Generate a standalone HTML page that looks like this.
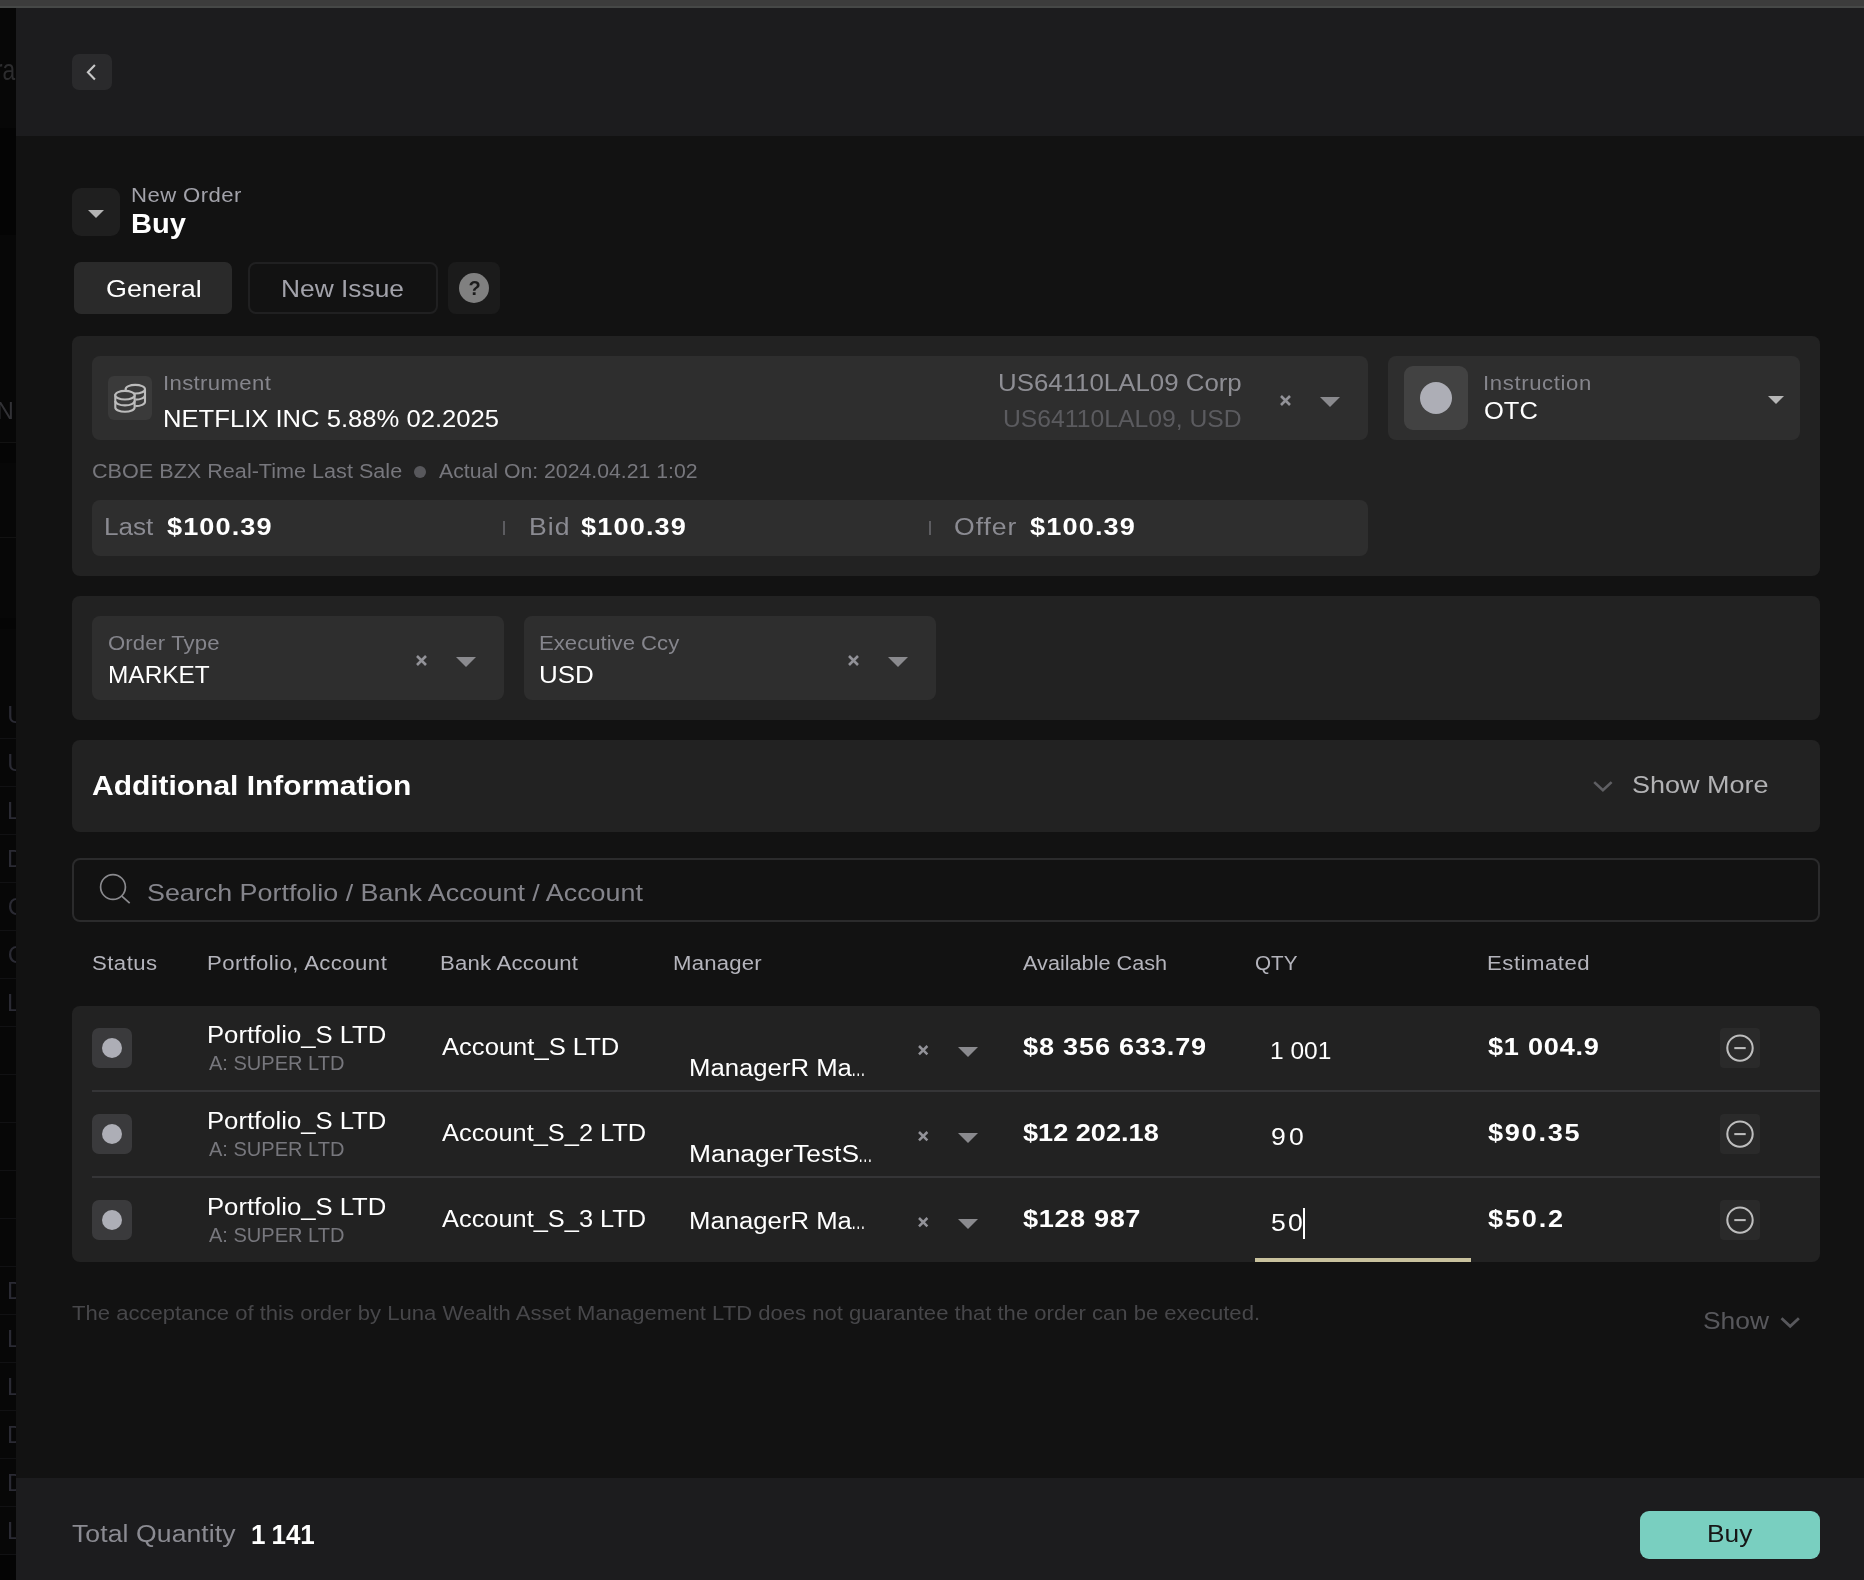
<!DOCTYPE html>
<html lang="en">
<head>
<meta charset="utf-8">
<title>New Order - Buy</title>
<style>
html,body{margin:0;padding:0;}
body{width:1864px;height:1580px;background:#121212;position:relative;overflow:hidden;font-family:"Liberation Sans",sans-serif;}
#app{position:absolute;left:0;top:0;width:1864px;height:1580px;will-change:transform;}
.b{position:absolute;box-sizing:border-box;display:block;}
.t{position:absolute;white-space:pre;line-height:1;font-weight:400;transform-origin:0 0;}
</style>
</head>
<body>
<div id="app">
<div class="b" style="left:0px;top:0px;width:1864px;height:6px;background:#3c3c3c;"></div>
<div class="b" style="left:0px;top:6px;width:1864px;height:2px;background:#464847;"></div>
<div class="b" style="left:0;top:0;width:16px;height:1580px;overflow:hidden">
<div class="b" style="left:0px;top:8px;width:16px;height:1572px;background:#070707;"></div>
<div class="b" style="left:0px;top:128px;width:16px;height:107px;background:#040404;"></div>
<div class="b" style="left:0px;top:1555px;width:16px;height:25px;background:#040404;"></div>
<div class="b" style="left:0px;top:442px;width:16px;height:1px;background:#121212;"></div>
<div class="b" style="left:0px;top:537px;width:16px;height:1px;background:#121212;"></div>
<div class="b" style="left:0px;top:443px;width:16px;height:20px;background:#050505;"></div>
<div class="b" style="left:0px;top:618px;width:16px;height:11px;background:#050505;"></div>
<span class="t" style="left:-4.52px;top:55px;font-size:30px;color:#2c2c2e;letter-spacing:-0.156px;transform:scaleX(0.7600);">ra</span>
<span class="t" style="left:-3.50px;top:399px;font-size:24px;color:#323236;">N</span>
<span class="t" style="left:7.25px;top:703px;font-size:24px;color:#2a2a33;">U</span>
<span class="t" style="left:7.25px;top:751px;font-size:24px;color:#2a2a33;">U</span>
<span class="t" style="left:7.00px;top:799px;font-size:24px;color:#2a2a33;">L</span>
<span class="t" style="left:7.00px;top:847px;font-size:24px;color:#2a2a33;">D</span>
<span class="t" style="left:7.75px;top:895px;font-size:24px;color:#2a2a33;">C</span>
<span class="t" style="left:7.75px;top:943px;font-size:24px;color:#2a2a33;">C</span>
<span class="t" style="left:7.00px;top:991px;font-size:24px;color:#2a2a33;">L</span>
<span class="t" style="left:7.00px;top:1279px;font-size:24px;color:#2a2a33;">D</span>
<span class="t" style="left:7.00px;top:1327px;font-size:24px;color:#2a2a33;">L</span>
<span class="t" style="left:7.00px;top:1375px;font-size:24px;color:#2a2a33;">L</span>
<span class="t" style="left:7.00px;top:1423px;font-size:24px;color:#2a2a33;">D</span>
<span class="t" style="left:7.00px;top:1471px;font-size:24px;color:#2a2a33;">D</span>
<span class="t" style="left:7.00px;top:1519px;font-size:24px;color:#2a2a33;">L</span>
<div class="b" style="left:0px;top:738px;width:16px;height:1px;background:#111113;"></div>
<div class="b" style="left:0px;top:786px;width:16px;height:1px;background:#111113;"></div>
<div class="b" style="left:0px;top:834px;width:16px;height:1px;background:#111113;"></div>
<div class="b" style="left:0px;top:882px;width:16px;height:1px;background:#111113;"></div>
<div class="b" style="left:0px;top:930px;width:16px;height:1px;background:#111113;"></div>
<div class="b" style="left:0px;top:978px;width:16px;height:1px;background:#111113;"></div>
<div class="b" style="left:0px;top:1026px;width:16px;height:1px;background:#111113;"></div>
<div class="b" style="left:0px;top:1074px;width:16px;height:1px;background:#111113;"></div>
<div class="b" style="left:0px;top:1122px;width:16px;height:1px;background:#111113;"></div>
<div class="b" style="left:0px;top:1170px;width:16px;height:1px;background:#111113;"></div>
<div class="b" style="left:0px;top:1218px;width:16px;height:1px;background:#111113;"></div>
<div class="b" style="left:0px;top:1266px;width:16px;height:1px;background:#111113;"></div>
<div class="b" style="left:0px;top:1314px;width:16px;height:1px;background:#111113;"></div>
<div class="b" style="left:0px;top:1362px;width:16px;height:1px;background:#111113;"></div>
<div class="b" style="left:0px;top:1410px;width:16px;height:1px;background:#111113;"></div>
<div class="b" style="left:0px;top:1458px;width:16px;height:1px;background:#111113;"></div>
<div class="b" style="left:0px;top:1506px;width:16px;height:1px;background:#111113;"></div>
<div class="b" style="left:0px;top:1554px;width:16px;height:1px;background:#111113;"></div>
</div>
<div class="b" style="left:16px;top:8px;width:1848px;height:128px;background:#1c1c1e;"></div>
<div class="b" style="left:72px;top:54px;width:40px;height:36px;background:#2a2a2c;border-radius:7px;"></div>
<svg class="b" style="left:72px;top:54px" width="40" height="36" viewBox="72 54 40 36"><path d="M94.900 65L87.900 72.300L94.900 79.600" stroke="#c8c8c8" stroke-width="2.1" fill="none"/></svg>
<div class="b" style="left:72px;top:188px;width:48px;height:48px;background:#1f1f1f;border-radius:9px;"></div>
<svg class="b" style="left:88px;top:210px" width="16" height="8" viewBox="0 0 16 8"><path d="M0 0H16L8.0 8Z" fill="#b4b4b4"/></svg>
<span class="t" style="left:131.31px;top:186px;font-size:19.6px;color:#a2a2aa;letter-spacing:0.370px;transform:scaleX(1.1300);">New Order</span>
<span class="t" style="left:131.10px;top:211px;font-size:26.8px;color:#ffffff;transform:scaleX(1.0852);font-weight:700;">Buy</span>
<div class="b" style="left:74px;top:262px;width:158px;height:52px;background:#2a2a2a;border-radius:7px;"></div>
<span class="t" style="left:105.60px;top:277px;font-size:24.0px;color:#ffffff;transform:scaleX(1.1199);">General</span>
<div class="b" style="left:248px;top:262px;width:190px;height:52px;border-radius:8px;border:2px solid #202021;"></div>
<span class="t" style="left:280.91px;top:277px;font-size:24.0px;color:#a2a2aa;transform:scaleX(1.0972);">New Issue</span>
<div class="b" style="left:448px;top:262px;width:52px;height:52px;background:#1b1b1b;border-radius:8px;"></div>
<div class="b" style="left:459px;top:273px;width:30px;height:30px;background:#808080;border-radius:15px;"></div>
<span class="t" style="left:468.60px;top:278px;font-size:20px;color:#1b1b1b;font-weight:700;">?</span>
<div class="b" style="left:72px;top:336px;width:1748px;height:240px;background:#222222;border-radius:8px;"></div>
<div class="b" style="left:92px;top:356px;width:1276px;height:84px;background:#2e2e2e;border-radius:8px;"></div>
<div class="b" style="left:108px;top:376px;width:44px;height:44px;background:#3a3a3a;border-radius:6px;"></div>
<svg class="b" style="left:108px;top:376px" width="44" height="44" viewBox="108 376 44 44" fill="none" stroke="#bcbcbc" stroke-width="2.1">
<ellipse cx="135.3" cy="389.2" rx="9.7" ry="4.3"/>
<path d="M145 389.2V401.800A9.700 4.300 0 0 1 135.300 406.100"/>
<path d="M145 395.300A9.700 4.300 0 0 1 135.300 399.600"/>
<path d="M115.300 395.200V407.400A9.650 4.300 0 0 0 134.600 407.400V395.200Z" fill="#3a3a3a"/>
<ellipse cx="124.95" cy="395.2" rx="9.65" ry="4.3" fill="#3a3a3a"/>
<path d="M115.300 401.100A9.650 4.300 0 0 0 134.600 401.100"/>
</svg>
<span class="t" style="left:163.32px;top:374px;font-size:19.6px;color:#85858c;letter-spacing:0.314px;transform:scaleX(1.1300);">Instrument</span>
<span class="t" style="left:163.39px;top:408px;font-size:23.5px;color:#ffffff;transform:scaleX(1.0901);">NETFLIX INC 5.88% 02.2025</span>
<span class="t" style="left:998.08px;top:372px;font-size:23.5px;color:#8e8e94;transform:scaleX(1.0996);">US64110LAL09 Corp</span>
<span class="t" style="left:1002.56px;top:408px;font-size:23.5px;color:#5b5b5f;transform:scaleX(1.0520);">US64110LAL09, USD</span>
<svg class="b" style="left:1278.5px;top:394.1px" width="13" height="13" viewBox="-6.5 -6.5 13 13"><path d="M-4.5 -4.5L4.5 4.5M4.5 -4.5L-4.5 4.5" stroke="#929298" stroke-width="2.6" fill="none"/></svg>
<svg class="b" style="left:1320px;top:397px" width="20" height="10" viewBox="0 0 20 10"><path d="M0 0H20L10.0 10Z" fill="#8a8a8e"/></svg>
<div class="b" style="left:1388px;top:356px;width:412px;height:84px;background:#2e2e2e;border-radius:8px;"></div>
<div class="b" style="left:1404px;top:366px;width:64px;height:64px;background:#424242;border-radius:9px;"></div>
<div class="b" style="left:1420px;top:382px;width:32px;height:32px;background:#adaeb6;border-radius:16px;"></div>
<span class="t" style="left:1483.02px;top:374px;font-size:19.6px;color:#85858c;letter-spacing:0.547px;transform:scaleX(1.1300);">Instruction</span>
<span class="t" style="left:1483.92px;top:400px;font-size:23.5px;color:#ffffff;transform:scaleX(1.0847);">OTC</span>
<svg class="b" style="left:1768px;top:396px" width="16" height="8" viewBox="0 0 16 8"><path d="M0 0H16L8.0 8Z" fill="#b6b6b6"/></svg>
<span class="t" style="left:91.50px;top:462px;font-size:19.6px;color:#77777d;transform:scaleX(1.1026);">CBOE BZX Real-Time Last Sale</span>
<div class="b" style="left:414px;top:466px;width:12px;height:12px;background:#58585c;border-radius:6px;"></div>
<span class="t" style="left:438.90px;top:462px;font-size:19.6px;color:#77777d;transform:scaleX(1.0839);">Actual On: 2024.04.21 1:02</span>
<div class="b" style="left:92px;top:500px;width:1276px;height:56px;background:#2e2e2e;border-radius:8px;"></div>
<span class="t" style="left:103.56px;top:516px;font-size:23.5px;color:#8b8b92;transform:scaleX(1.1110);">Last</span>
<span class="t" style="left:166.82px;top:515px;font-size:24.0px;color:#ffffff;letter-spacing:0.972px;transform:scaleX(1.1300);font-weight:700;">$100.39</span>
<div class="b" style="left:503px;top:521px;width:2px;height:14px;background:#5c5c60;"></div>
<span class="t" style="left:529.02px;top:516px;font-size:23.5px;color:#8b8b92;letter-spacing:0.997px;transform:scaleX(1.1300);">Bid</span>
<span class="t" style="left:580.92px;top:515px;font-size:24.0px;color:#ffffff;letter-spacing:1.016px;transform:scaleX(1.1300);font-weight:700;">$100.39</span>
<div class="b" style="left:929px;top:521px;width:2px;height:14px;background:#5c5c60;"></div>
<span class="t" style="left:954.37px;top:516px;font-size:23.5px;color:#8b8b92;letter-spacing:0.868px;transform:scaleX(1.1300);">Offer</span>
<span class="t" style="left:1029.92px;top:515px;font-size:24.0px;color:#ffffff;letter-spacing:1.016px;transform:scaleX(1.1300);font-weight:700;">$100.39</span>
<div class="b" style="left:72px;top:596px;width:1748px;height:124px;background:#222222;border-radius:8px;"></div>
<div class="b" style="left:92px;top:616px;width:412px;height:84px;background:#2e2e2e;border-radius:8px;"></div>
<span class="t" style="left:108.15px;top:634px;font-size:19.6px;color:#85858c;letter-spacing:0.123px;transform:scaleX(1.1300);">Order Type</span>
<span class="t" style="left:107.68px;top:664px;font-size:23.5px;color:#ffffff;transform:scaleX(1.0391);">MARKET</span>
<svg class="b" style="left:414.5px;top:654.0px" width="13" height="13" viewBox="-6.5 -6.5 13 13"><path d="M-4.5 -4.5L4.5 4.5M4.5 -4.5L-4.5 4.5" stroke="#929298" stroke-width="2.6" fill="none"/></svg>
<svg class="b" style="left:456px;top:657px" width="20" height="10" viewBox="0 0 20 10"><path d="M0 0H20L10.0 10Z" fill="#8a8a8e"/></svg>
<div class="b" style="left:524px;top:616px;width:412px;height:84px;background:#2e2e2e;border-radius:8px;"></div>
<span class="t" style="left:539.31px;top:634px;font-size:19.6px;color:#85858c;transform:scaleX(1.1297);">Executive Ccy</span>
<span class="t" style="left:539.06px;top:664px;font-size:23.5px;color:#ffffff;transform:scaleX(1.1063);">USD</span>
<svg class="b" style="left:846.5px;top:654.0px" width="13" height="13" viewBox="-6.5 -6.5 13 13"><path d="M-4.5 -4.5L4.5 4.5M4.5 -4.5L-4.5 4.5" stroke="#929298" stroke-width="2.6" fill="none"/></svg>
<svg class="b" style="left:888px;top:657px" width="20" height="10" viewBox="0 0 20 10"><path d="M0 0H20L10.0 10Z" fill="#8a8a8e"/></svg>
<div class="b" style="left:72px;top:740px;width:1748px;height:92px;background:#222222;border-radius:8px;"></div>
<span class="t" style="left:91.98px;top:772px;font-size:27.4px;color:#ffffff;transform:scaleX(1.0933);font-weight:700;">Additional Information</span>
<svg class="b" style="left:1588px;top:774px" width="30" height="24" viewBox="1588 774 30 24"><path d="M1594.200 782.100L1602.900 790.300L1611.600 782.100" stroke="#5f5f63" stroke-width="2.600" fill="none"/></svg>
<span class="t" style="left:1631.88px;top:773px;font-size:24.0px;color:#b2b2b4;transform:scaleX(1.1236);">Show More</span>
<div class="b" style="left:72px;top:858px;width:1748px;height:64px;border-radius:8px;border:2px solid #2b2b2c;"></div>
<svg class="b" style="left:96px;top:870px" width="40" height="40" viewBox="0 0 40 40"><circle cx="17" cy="17" r="12.4" stroke="#8a8a8e" stroke-width="1.7" fill="none"/><path d="M25.800 26.100L33.700 33.200" stroke="#8a8a8e" stroke-width="1.7"/></svg>
<span class="t" style="left:147.08px;top:881px;font-size:24.0px;color:#85858c;transform:scaleX(1.1196);">Search Portfolio / Bank Account / Account</span>
<span class="t" style="left:91.65px;top:954px;font-size:19.6px;color:#b4b4bc;letter-spacing:0.415px;transform:scaleX(1.1300);">Status</span>
<span class="t" style="left:207.31px;top:954px;font-size:19.6px;color:#b4b4bc;letter-spacing:0.389px;transform:scaleX(1.1300);">Portfolio, Account</span>
<span class="t" style="left:439.91px;top:954px;font-size:19.6px;color:#b4b4bc;letter-spacing:0.207px;transform:scaleX(1.1300);">Bank Account</span>
<span class="t" style="left:672.50px;top:954px;font-size:19.6px;color:#b4b4bc;letter-spacing:0.181px;transform:scaleX(1.1300);">Manager</span>
<span class="t" style="left:1023.00px;top:954px;font-size:19.6px;color:#b4b4bc;transform:scaleX(1.1057);">Available Cash</span>
<span class="t" style="left:1254.61px;top:954px;font-size:19.6px;color:#b4b4bc;transform:scaleX(1.0553);">QTY</span>
<span class="t" style="left:1486.51px;top:954px;font-size:19.6px;color:#b4b4bc;letter-spacing:0.464px;transform:scaleX(1.1300);">Estimated</span>
<div class="b" style="left:72px;top:1006px;width:1748px;height:256px;background:#222222;border-radius:8px;"></div>
<div class="b" style="left:92px;top:1090px;width:1728px;height:2px;background:#353537;"></div>
<div class="b" style="left:92px;top:1176px;width:1728px;height:2px;background:#353537;"></div>
<div class="b" style="left:92px;top:1028px;width:40px;height:40px;background:#3a3a3c;border-radius:7px;"></div>
<div class="b" style="left:102px;top:1038px;width:20px;height:20px;background:#adaeb6;border-radius:10px;"></div>
<span class="t" style="left:207.49px;top:1024px;font-size:23.5px;color:#ffffff;transform:scaleX(1.0923);">Portfolio_S LTD</span>
<span class="t" style="left:209.40px;top:1054px;font-size:19.6px;color:#77777d;transform:scaleX(1.0226);">A: SUPER LTD</span>
<span class="t" style="left:441.90px;top:1036px;font-size:23.5px;color:#ffffff;transform:scaleX(1.0887);">Account_S LTD</span>
<span class="t" style="left:688.69px;top:1057px;font-size:23.5px;color:#ffffff;transform:scaleX(1.0940);">ManagerR Ma</span>
<span class="t" style="left:851.38px;top:1057px;font-size:23.5px;color:#ffffff;transform:scaleX(0.6200);">…</span>
<svg class="b" style="left:917.1999999999999px;top:1044.3999999999999px" width="12.4" height="12.4" viewBox="-6.2 -6.2 12.4 12.4"><path d="M-4.2 -4.2L4.2 4.2M4.2 -4.2L-4.2 4.2" stroke="#929298" stroke-width="2.5" fill="none"/></svg>
<svg class="b" style="left:958px;top:1047px" width="20" height="10" viewBox="0 0 20 10"><path d="M0 0H20L10.0 10Z" fill="#8a8a8e"/></svg>
<span class="t" style="left:1022.72px;top:1035px;font-size:24.0px;color:#ffffff;letter-spacing:0.713px;transform:scaleX(1.1300);font-weight:700;">$8 356 633.79</span>
<span class="t" style="left:1269.98px;top:1040px;font-size:23.5px;color:#ffffff;transform:scaleX(1.0428);">1 001</span>
<span class="t" style="left:1487.72px;top:1035px;font-size:24.0px;color:#ffffff;letter-spacing:0.677px;transform:scaleX(1.1300);font-weight:700;">$1 004.9</span>
<div class="b" style="left:1720px;top:1028px;width:40px;height:40px;background:#2a2a2a;border-radius:4px;"></div>
<svg class="b" style="left:1720px;top:1028px" width="40" height="40" viewBox="0 0 40 40"><circle cx="20" cy="20.100" r="12.700" stroke="#bebebe" stroke-width="2.050" fill="none"/><path d="M14.300 20.100H25.700" stroke="#bebebe" stroke-width="2.050"/></svg>
<div class="b" style="left:92px;top:1114px;width:40px;height:40px;background:#3a3a3c;border-radius:7px;"></div>
<div class="b" style="left:102px;top:1124px;width:20px;height:20px;background:#adaeb6;border-radius:10px;"></div>
<span class="t" style="left:207.49px;top:1110px;font-size:23.5px;color:#ffffff;transform:scaleX(1.0923);">Portfolio_S LTD</span>
<span class="t" style="left:209.40px;top:1140px;font-size:19.6px;color:#77777d;transform:scaleX(1.0226);">A: SUPER LTD</span>
<span class="t" style="left:441.90px;top:1122px;font-size:23.5px;color:#ffffff;transform:scaleX(1.0803);">Account_S_2 LTD</span>
<span class="t" style="left:688.64px;top:1143px;font-size:23.5px;color:#ffffff;transform:scaleX(1.1220);">ManagerTestS</span>
<span class="t" style="left:857.99px;top:1143px;font-size:23.5px;color:#ffffff;transform:scaleX(0.6200);">…</span>
<svg class="b" style="left:917.1999999999999px;top:1130.3999999999999px" width="12.4" height="12.4" viewBox="-6.2 -6.2 12.4 12.4"><path d="M-4.2 -4.2L4.2 4.2M4.2 -4.2L-4.2 4.2" stroke="#929298" stroke-width="2.5" fill="none"/></svg>
<svg class="b" style="left:958px;top:1133px" width="20" height="10" viewBox="0 0 20 10"><path d="M0 0H20L10.0 10Z" fill="#8a8a8e"/></svg>
<span class="t" style="left:1022.72px;top:1121px;font-size:24.0px;color:#ffffff;transform:scaleX(1.1300);font-weight:700;">$12 202.18</span>
<span class="t" style="left:1270.67px;top:1126px;font-size:23.5px;color:#ffffff;letter-spacing:2.918px;transform:scaleX(1.1300);">90</span>
<span class="t" style="left:1487.72px;top:1121px;font-size:24.0px;color:#ffffff;letter-spacing:1.518px;transform:scaleX(1.1300);font-weight:700;">$90.35</span>
<div class="b" style="left:1720px;top:1114px;width:40px;height:40px;background:#2a2a2a;border-radius:4px;"></div>
<svg class="b" style="left:1720px;top:1114px" width="40" height="40" viewBox="0 0 40 40"><circle cx="20" cy="20.100" r="12.700" stroke="#bebebe" stroke-width="2.050" fill="none"/><path d="M14.300 20.100H25.700" stroke="#bebebe" stroke-width="2.050"/></svg>
<div class="b" style="left:92px;top:1200px;width:40px;height:40px;background:#3a3a3c;border-radius:7px;"></div>
<div class="b" style="left:102px;top:1210px;width:20px;height:20px;background:#adaeb6;border-radius:10px;"></div>
<span class="t" style="left:207.49px;top:1196px;font-size:23.5px;color:#ffffff;transform:scaleX(1.0923);">Portfolio_S LTD</span>
<span class="t" style="left:209.40px;top:1226px;font-size:19.6px;color:#77777d;transform:scaleX(1.0226);">A: SUPER LTD</span>
<span class="t" style="left:441.90px;top:1208px;font-size:23.5px;color:#ffffff;transform:scaleX(1.0803);">Account_S_3 LTD</span>
<span class="t" style="left:688.69px;top:1210px;font-size:23.5px;color:#ffffff;transform:scaleX(1.0940);">ManagerR Ma</span>
<span class="t" style="left:851.38px;top:1210px;font-size:23.5px;color:#ffffff;transform:scaleX(0.6200);">…</span>
<svg class="b" style="left:917.1999999999999px;top:1216.3999999999999px" width="12.4" height="12.4" viewBox="-6.2 -6.2 12.4 12.4"><path d="M-4.2 -4.2L4.2 4.2M4.2 -4.2L-4.2 4.2" stroke="#929298" stroke-width="2.5" fill="none"/></svg>
<svg class="b" style="left:958px;top:1219px" width="20" height="10" viewBox="0 0 20 10"><path d="M0 0H20L10.0 10Z" fill="#8a8a8e"/></svg>
<span class="t" style="left:1022.72px;top:1207px;font-size:24.0px;color:#ffffff;letter-spacing:0.544px;transform:scaleX(1.1300);font-weight:700;">$128 987</span>
<span class="t" style="left:1270.67px;top:1212px;font-size:23.5px;color:#ffffff;letter-spacing:2.033px;transform:scaleX(1.1300);">50</span>
<span class="t" style="left:1487.72px;top:1207px;font-size:24.0px;color:#ffffff;letter-spacing:1.621px;transform:scaleX(1.1300);font-weight:700;">$50.2</span>
<div class="b" style="left:1720px;top:1200px;width:40px;height:40px;background:#2a2a2a;border-radius:4px;"></div>
<svg class="b" style="left:1720px;top:1200px" width="40" height="40" viewBox="0 0 40 40"><circle cx="20" cy="20.100" r="12.700" stroke="#bebebe" stroke-width="2.050" fill="none"/><path d="M14.300 20.100H25.700" stroke="#bebebe" stroke-width="2.050"/></svg>
<div class="b" style="left:1303px;top:1208px;width:2px;height:31px;background:#ffffff;"></div>
<div class="b" style="left:1255px;top:1258px;width:216px;height:4px;background:#c9c29e;"></div>
<span class="t" style="left:72.32px;top:1304px;font-size:19.6px;color:#47474a;transform:scaleX(1.1264);">The acceptance of this order by Luna Wealth Asset Management LTD does not guarantee that the order can be executed.</span>
<span class="t" style="left:1702.70px;top:1309px;font-size:24.0px;color:#58585c;transform:scaleX(1.1002);">Show</span>
<svg class="b" style="left:1775px;top:1310px" width="30" height="24" viewBox="1775 1310 30 24"><path d="M1781.500 1318.300L1790.200 1326.300L1798.900 1318.300" stroke="#58585c" stroke-width="2.800" fill="none"/></svg>
<div class="b" style="left:16px;top:1478px;width:1848px;height:102px;background:#1c1c1e;"></div>
<span class="t" style="left:71.84px;top:1523px;font-size:23.5px;color:#8b8b92;letter-spacing:0.083px;transform:scaleX(1.1300);">Total Quantity</span>
<span class="t" style="left:251.14px;top:1521px;font-size:27.4px;color:#ffffff;word-spacing:-1.353px;transform:scaleX(0.9500);font-weight:700;">1 141</span>
<div class="b" style="left:1640px;top:1511px;width:180px;height:48px;background:#79cfc0;border-radius:9px;"></div>
<span class="t" style="left:1706.81px;top:1522px;font-size:24.0px;color:#161616;transform:scaleX(1.0954);">Buy</span>
</div>
</body>
</html>
